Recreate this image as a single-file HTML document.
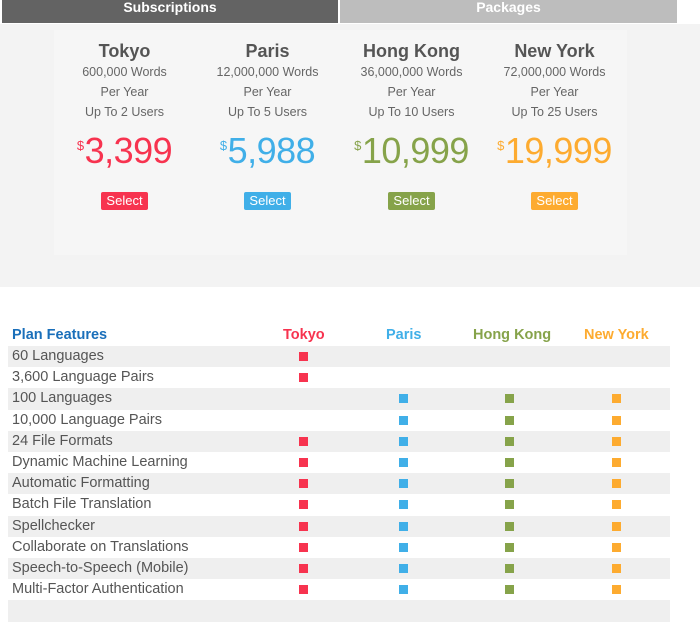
<!DOCTYPE html>
<html><head><meta charset="utf-8"><style>
*{margin:0;padding:0;box-sizing:border-box}
body{width:700px;height:603px;background:#fff;font-family:"Liberation Sans",sans-serif;position:relative;overflow:hidden;color:#555}
.tab{position:absolute;top:0;height:23px;color:#fff;font-weight:bold;font-size:14px;text-align:center;line-height:15px}
.outer{position:absolute;left:0;top:24px;width:700px;height:263px;background:#f3f3f3}
.inner{position:absolute;left:54px;top:30px;width:573px;height:225px;background:#f6f6f6}
.col{position:absolute;top:40px;width:143px;text-align:center}
.col h2{font-size:18px;color:#555;line-height:22px}
.col .t{font-size:12.5px;line-height:20px;color:#666}
.col .p{font-size:36px;line-height:40px;margin-top:4px;letter-spacing:-0.5px}
.col .p sup{font-size:13px;vertical-align:13px;margin-right:1px}
.btn{display:inline-block;margin-top:21px;color:#fff;font-size:13px;padding:0 5px;height:18px;line-height:18px;border-radius:2px}
.row{position:absolute;left:8px;width:662px;height:21.2px;font-size:14.5px;line-height:21px;padding-left:4px;color:#555}
.g{background:#efefef}
.sq{position:absolute;top:6px;width:9px;height:9px}
.h{position:absolute;top:326px;font-size:14.5px;font-weight:bold;line-height:18px}
</style></head><body>
<div class="tab" style="left:2px;width:336px;background:#636363">Subscriptions</div>
<div class="tab" style="left:340px;width:337px;background:#bdbdbd">Packages</div>
<div class="outer"></div>
<div class="inner"></div>
<div class="col" style="left:53px"><h2>Tokyo</h2><div class="t">600,000 Words</div><div class="t">Per Year</div><div class="t">Up To 2 Users</div><div class="p" style="color:#f7334f"><sup>$</sup>3,399</div><span class="btn" style="background:#f7334f">Select</span></div>
<div class="col" style="left:196px"><h2>Paris</h2><div class="t">12,000,000 Words</div><div class="t">Per Year</div><div class="t">Up To 5 Users</div><div class="p" style="color:#40afe8"><sup>$</sup>5,988</div><span class="btn" style="background:#40afe8">Select</span></div>
<div class="col" style="left:340px"><h2>Hong Kong</h2><div class="t">36,000,000 Words</div><div class="t">Per Year</div><div class="t">Up To 10 Users</div><div class="p" style="color:#86a34a"><sup>$</sup>10,999</div><span class="btn" style="background:#86a34a">Select</span></div>
<div class="col" style="left:483px"><h2>New York</h2><div class="t">72,000,000 Words</div><div class="t">Per Year</div><div class="t">Up To 25 Users</div><div class="p" style="color:#fdab30"><sup>$</sup>19,999</div><span class="btn" style="background:#fdab30">Select</span></div>

<div class="h" style="left:12px;color:#1a6fba">Plan Features</div>
<div class="h" style="left:283px;color:#f7334f">Tokyo</div>
<div class="h" style="left:386px;color:#40afe8">Paris</div>
<div class="h" style="left:473px;color:#86a34a">Hong Kong</div>
<div class="h" style="left:584px;color:#fdab30">New York</div>

<div id="rows"></div>
<script>
var rows=[["60 Languages",1,0],["3,600 Language Pairs",1,0],["100 Languages",0,1],["10,000 Language Pairs",0,1],["24 File Formats",1,1],["Dynamic Machine Learning",1,1],["Automatic Formatting",1,1],["Batch File Translation",1,1],["Spellchecker",1,1],["Collaborate on Translations",1,1],["Speech-to-Speech (Mobile)",1,1],["Multi-Factor Authentication",1,1]];
var h="";
rows.forEach(function(r,i){
 h+='<div class="row'+(i%2==0?' g':'')+'" style="top:'+(346+i*21.2)+'px">'+r[0];
 if(r[1])h+='<span class="sq" style="left:291px;background:#f7334f"></span>';
 if(r[2])h+='<span class="sq" style="left:391px;background:#40afe8"></span><span class="sq" style="left:497px;background:#86a34a"></span><span class="sq" style="left:604px;background:#fdab30"></span>';
 h+='</div>';
});
h+='<div class="row g" style="top:600.4px"></div>';
document.getElementById("rows").innerHTML=h;
</script>
</body></html>
